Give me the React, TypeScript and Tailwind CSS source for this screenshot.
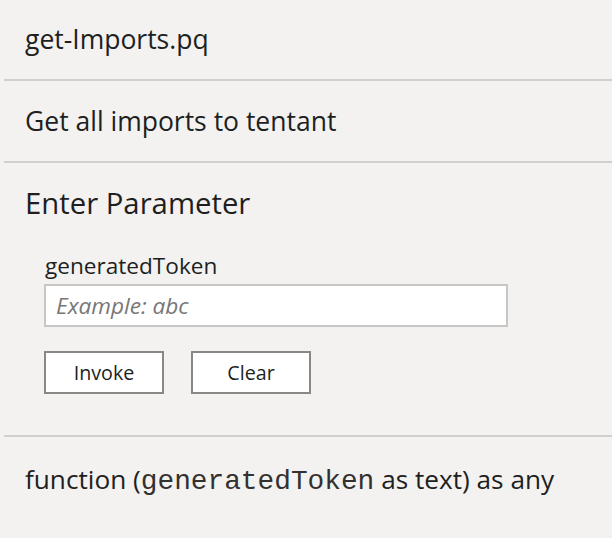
import React from "react";

const sans = { fontFamily: '"Open Sans", "Noto Sans", sans-serif' };

export default function App() {
  return (
    <div
      className="w-[612px] h-[538px] bg-[#f3f2f1] text-[#201f1e] overflow-hidden"
      style={sans}
    >
      <div className="h-[79px] pl-[25px] flex items-center">
        <span className="text-[26.5px] leading-none">get-Imports.pq</span>
      </div>
      <div className="ml-[4px] h-[2px] bg-[#d2d0ce]" />
      <div className="h-[80px] pl-[25px] flex items-center">
        <span className="text-[26.5px] leading-none">Get all imports to tentant</span>
      </div>
      <div className="ml-[4px] h-[2px] bg-[#d2d0ce]" />
      <div className="h-[272px] pl-[25px] pt-[26px] flex flex-col">
        <div className="text-[29.3px] leading-none">Enter Parameter</div>
        <div className="pl-[19px] pt-[37px] flex flex-col">
          <label className="pl-[1px] text-[22.6px] leading-none">generatedToken</label>
          <input
            className="mt-[6px] w-[464px] h-[43px] border-2 border-[#c8c6c4] bg-white px-[10px] text-[22.6px] italic placeholder:text-[#797775] outline-none"
            placeholder="Example: abc"
            style={sans}
          />
          <div className="mt-[24px] flex gap-[27px]">
            <button className="w-[120px] h-[43px] border-2 border-[#8a8886] bg-white text-[19.7px] text-[#201f1e]" style={sans}>
              Invoke
            </button>
            <button className="w-[120px] h-[43px] border-2 border-[#8a8886] bg-white text-[19.7px] text-[#201f1e]" style={sans}>
              Clear
            </button>
          </div>
        </div>
      </div>
      <div className="ml-[4px] h-[2px] bg-[#d2d0ce]" />
      <div className="h-[88px] pl-[25px] flex items-center">
        <span className="text-[26.2px] leading-none whitespace-nowrap">
          function (
          <span
            className="text-[27.8px] text-[#323130]"
            style={{ fontFamily: '"Liberation Mono", monospace' }}
          >
            generatedToken
          </span>{" "}
          as text) as any
        </span>
      </div>
    </div>
  );
}
